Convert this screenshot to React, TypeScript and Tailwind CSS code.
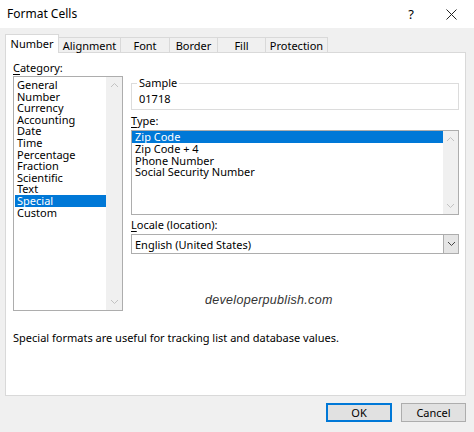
import React from "react";

const Chev = ({ dir, cls }: { dir: "up" | "down"; cls?: string }) => (
  <svg width="9" height="6" viewBox="0 0 9 6" className={cls}>
    {dir === "up" ? (
      <polyline points="1,5 4.5,1.5 8,5" fill="none" stroke="currentColor" strokeWidth="1" />
    ) : (
      <polyline points="1,1 4.5,4.5 8,1" fill="none" stroke="currentColor" strokeWidth="1" />
    )}
  </svg>
);

const tabs = [
  { t: "Number", w: "w-[54px]" },
  { t: "Alignment", w: "w-[62px]" },
  { t: "Font", w: "w-[49px]" },
  { t: "Border", w: "w-[48px]" },
  { t: "Fill", w: "w-[48px]" },
  { t: "Protection", w: "w-[62px]" },
];

const cats = [
  "General",
  "Number",
  "Currency",
  "Accounting",
  "Date",
  "Time",
  "Percentage",
  "Fraction",
  "Scientific",
  "Text",
  "Special",
  "Custom",
];

const types = ["Zip Code", "Zip Code + 4", "Phone Number", "Social Security Number"];

export default function App() {
  return (
    <div
      className="w-[474px] h-[432px] bg-[#f0f0f0] text-black flex flex-col overflow-hidden"
      style={{ fontFamily: '"Noto Sans", "Open Sans", sans-serif' }}
    >
      {/* title bar */}
      <div className="h-[28px] bg-white flex items-center pl-[7px] shrink-0">
        <span className="text-[12px] leading-none">Format Cells</span>
        <div className="ml-auto flex items-center">
          <span className="text-[13px] leading-none w-[20px] text-center mr-[25px]">?</span>
          <svg width="11" height="11" viewBox="0 0 11 11" className="mr-[17px]">
            <line x1="0.5" y1="0.5" x2="10.5" y2="10.5" stroke="#222" strokeWidth="1" />
            <line x1="10.5" y1="0.5" x2="0.5" y2="10.5" stroke="#222" strokeWidth="1" />
          </svg>
        </div>
      </div>

      {/* tabs */}
      <div className="h-[24px] flex items-end pl-[5px] shrink-0 relative z-10">
        {tabs.map((t, i) =>
          i === 0 ? (
            <div
              key={t.t}
              className={`${t.w} h-[19px] bg-white border border-b-0 border-[#d9d9d9] flex items-center justify-center text-[11px] leading-none pb-[1px] -mb-[1px]`}
            >
              {t.t}
            </div>
          ) : (
            <div
              key={t.t}
              className={`${t.w} h-[15px] bg-[#f0f0f0] border border-l-0 border-b-0 border-[#d9d9d9] flex items-center justify-center text-[11px] leading-none`}
            >
              {t.t}
            </div>
          )
        )}
      </div>

      {/* panel */}
      <div className="mx-[5px] w-[461px] h-[344px] bg-white border border-[#d9d9d9] shrink-0 flex flex-col pl-[7px] pt-[7px]">
        <div className="flex">
          {/* left column */}
          <div className="w-[110px] flex flex-col">
            <div className="h-[15px] text-[11px] leading-[15px]">
              <span className="underline underline-offset-2">C</span>ategory:
            </div>
            <div className="mt-[1px] h-[235px] border border-[#adadad] flex">
              <div className="flex-1 pt-[2px] pl-[1px]">
                {cats.map((c) => (
                  <div
                    key={c}
                    className={`h-[11.6px] text-[11px] leading-[11.6px] pl-[2px] ${
                      c === "Special" ? "bg-[#0078d7] text-white" : ""
                    }`}
                  >
                    {c}
                  </div>
                ))}
              </div>
              <div className="w-[16px] bg-[#f0f0f0] flex flex-col items-center justify-between py-[5px] text-[#c2c2c2]">
                <Chev dir="up" />
                <Chev dir="down" />
              </div>
            </div>
          </div>

          {/* right column */}
          <div className="ml-[8px] w-[328px] flex flex-col pt-[23px]">
            <div className="relative h-[27px] border border-[#dcdcdc] flex items-center pl-[7px] pt-[4px]">
              <span className="absolute -top-[9px] left-[5px] bg-white px-[2px] text-[11px] leading-[16px]">
                Sample
              </span>
              <span className="text-[11px] leading-none">01718</span>
            </div>
            <div className="mt-[4px] h-[14px] text-[11px] leading-[14px]">
              <span className="underline underline-offset-2">T</span>ype:
            </div>
            <div className="mt-[2px] h-[85px] border border-[#adadad] flex">
              <div className="flex-1">
                {types.map((t, i) => (
                  <div
                    key={t}
                    className={`h-[11.8px] text-[11px] leading-[11.8px] pl-[3px] ${
                      i === 0 ? "bg-[#0078d7] text-white" : ""
                    }`}
                  >
                    {t}
                  </div>
                ))}
              </div>
              <div className="w-[15px] bg-[#f0f0f0] flex flex-col items-center justify-between py-[5px] text-[#c2c2c2]">
                <Chev dir="up" />
                <Chev dir="down" />
              </div>
            </div>
            <div className="mt-[3px] h-[14px] text-[11px] leading-[14px]">
              <span className="underline underline-offset-2">L</span>ocale (location):
            </div>
            <div className="mt-[2px] h-[20px] border border-[#adadad] flex items-center">
              <span className="flex-1 pl-[3px] text-[11px] leading-none">English (United States)</span>
              <div className="w-[15px] h-full bg-[#e5e5e5] border-l border-[#adadad] flex items-center justify-center text-[#444]">
                <Chev dir="down" />
              </div>
            </div>
            <div
              className="mt-[40px] ml-[74px] text-[12.5px] leading-none italic text-[#333] tracking-[0.3px]"
              style={{ fontFamily: '"Liberation Sans", sans-serif' }}
            >
              developerpublish.com
            </div>
          </div>
        </div>
        <div className="mt-[21px] text-[11px] leading-none">
          Special formats are useful for tracking list and database values.
        </div>
      </div>

      {/* buttons */}
      <div className="flex justify-end gap-[9px] pr-[8px] mt-[7px]">
        <button className="w-[66px] h-[19px] bg-[#e1e1e1] border border-[#0078d7] outline outline-1 outline-[#0078d7] -outline-offset-2 text-[11px] leading-none">
          OK
        </button>
        <button className="w-[65px] h-[19px] bg-[#e1e1e1] border border-[#adadad] text-[11px] leading-none">
          Cancel
        </button>
      </div>
    </div>
  );
}
